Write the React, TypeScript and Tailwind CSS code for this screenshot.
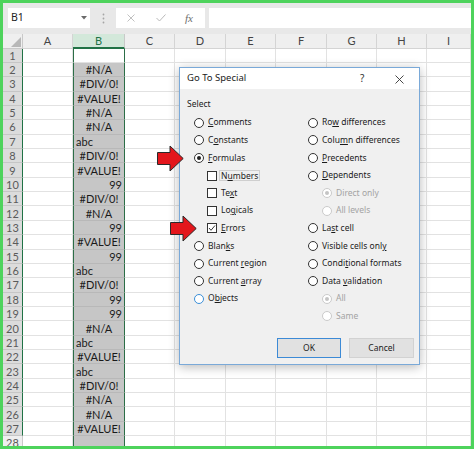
import clsx from 'clsx'

const cols = ['A', 'B', 'C', 'D', 'E', 'F', 'G', 'H', 'I']

// value, alignment of column B
const bVals: [string, 'c' | 'l' | 'r'][] = [
  ['', 'c'],
  ['#N/A', 'c'],
  ['#DIV/0!', 'c'],
  ['#VALUE!', 'c'],
  ['#N/A', 'c'],
  ['#N/A', 'c'],
  ['abc', 'l'],
  ['#DIV/0!', 'c'],
  ['#VALUE!', 'c'],
  ['99', 'r'],
  ['#DIV/0!', 'c'],
  ['#N/A', 'c'],
  ['99', 'r'],
  ['#VALUE!', 'c'],
  ['99', 'r'],
  ['abc', 'l'],
  ['#DIV/0!', 'c'],
  ['99', 'r'],
  ['99', 'r'],
  ['#N/A', 'c'],
  ['abc', 'l'],
  ['#VALUE!', 'c'],
  ['abc', 'l'],
  ['#DIV/0!', 'c'],
  ['#N/A', 'c'],
  ['#N/A', 'c'],
  ['#VALUE!', 'c'],
  ['', 'c'],
]

const gridCols = 'grid grid-cols-[20px_50px_52px_50px_51px_50px_51px_50px_50px_1fr]'

function Radio({ checked, disabled, focus }: { checked?: boolean; disabled?: boolean; focus?: boolean }) {
  return (
    <span
      className={clsx(
        'flex h-[10px] w-[10px] shrink-0 items-center justify-center rounded-full border bg-white',
        disabled ? 'border-[#cacaca]' : focus ? 'border-[#3a8fd8]' : 'border-[#333]'
      )}
    >
      {checked && (
        <span className={clsx('h-[4px] w-[4px] rounded-full', disabled ? 'bg-[#c4c4c4]' : 'bg-[#1f1f1f]')} />
      )}
    </span>
  )
}

function Check({ checked }: { checked?: boolean }) {
  return (
    <span className="flex h-[10px] w-[10px] shrink-0 items-center justify-center border border-[#333] bg-white">
      {checked && (
        <svg width="8" height="8" viewBox="0 0 8 8">
          <polyline points="1,4 3,6.3 7,1.5" fill="none" stroke="#222" strokeWidth="0.9" />
        </svg>
      )}
    </span>
  )
}

function Label({ pre, u, post, disabled }: { pre: string; u?: string; post?: string; disabled?: boolean }) {
  return (
    <span className={clsx('whitespace-nowrap', disabled ? 'text-[#a3a3a3]' : 'text-[#1b1b1b]')}>
      {pre}
      {u && <u className="underline-offset-1">{u}</u>}
      {post}
    </span>
  )
}

function Arrow() {
  return (
    <svg width="27" height="27" viewBox="0 0 27 27">
      <path d="M0.5 7.5 H13 V1 L26.2 13.5 L13 26 V19.5 H0.5 Z" fill="#e3161c" stroke="#2a2a2a" strokeWidth="1" />
    </svg>
  )
}

function Dialog() {
  const row = 'flex h-[17.6px] items-center gap-[4px]'
  return (
    <div className="absolute left-[176px] top-[64px] flex h-[298px] w-[241px] flex-col border border-[#7aa9d8] bg-[#f0f0f0] font-['Noto_Sans',sans-serif] text-[8.5px] shadow-[0_2px_10px_rgba(0,0,0,0.28)]">
      <div className="relative flex h-[21px] items-center bg-white pl-[7px] text-[9.5px] text-[#1b1b1b]">
        Go To Special
        <span className="absolute left-[180px] top-[3px] text-[10px] text-[#333]">?</span>
        <svg className="absolute left-[215px] top-[7px]" width="9" height="9" viewBox="0 0 9 9">
          <path d="M0.5 0.5 L8.5 8.5 M8.5 0.5 L0.5 8.5" stroke="#333" strokeWidth="0.9" />
        </svg>
      </div>
      <div className="pl-[7px] pt-[8px]">
        <div className="flex h-[14px] items-center text-[#1b1b1b]">Select</div>
      </div>
      <div className="mt-[3px] flex">
        <div className="w-[128px] pl-[14px]">
          <div className={row}><Radio /><Label pre="" u="C" post="omments" /></div>
          <div className={row}><Radio /><Label pre="C" u="o" post="nstants" /></div>
          <div className={row}><Radio checked /><Label pre="" u="F" post="ormulas" /></div>
          <div className={clsx(row, 'pl-[13px]')}>
            <Check />
            <span className="-ml-[2px] border border-[#cfcfcf] px-[1px] leading-[9px]">
              <Label pre="N" u="u" post="mbers" />
            </span>
          </div>
          <div className={clsx(row, 'pl-[13px]')}><Check /><Label pre="Te" u="x" post="t" /></div>
          <div className={clsx(row, 'pl-[13px]')}><Check /><Label pre="Lo" u="g" post="icals" /></div>
          <div className={clsx(row, 'pl-[13px]')}><Check checked /><Label pre="" u="E" post="rrors" /></div>
          <div className={row}><Radio /><Label pre="Blan" u="k" post="s" /></div>
          <div className={row}><Radio /><Label pre="Current " u="r" post="egion" /></div>
          <div className={row}><Radio /><Label pre="Current " u="a" post="rray" /></div>
          <div className={row}><Radio focus /><Label pre="O" u="b" post="jects" /></div>
        </div>
        <div className="flex-1">
          <div className={row}><Radio /><Label pre="Ro" u="w" post=" differences" /></div>
          <div className={row}><Radio /><Label pre="Colu" u="m" post="n differences" /></div>
          <div className={row}><Radio /><Label pre="" u="P" post="recedents" /></div>
          <div className={row}><Radio /><Label pre="" u="D" post="ependents" /></div>
          <div className={clsx(row, 'pl-[14px]')}><Radio checked disabled /><Label pre="Direct only" disabled /></div>
          <div className={clsx(row, 'pl-[14px]')}><Radio disabled /><Label pre="All levels" disabled /></div>
          <div className={row}><Radio /><Label pre="La" u="s" post="t cell" /></div>
          <div className={row}><Radio /><Label pre="Visible cells onl" u="y" /></div>
          <div className={row}><Radio /><Label pre="Condi" u="t" post="ional formats" /></div>
          <div className={row}><Radio /><Label pre="Data " u="v" post="alidation" /></div>
          <div className={clsx(row, 'pl-[14px]')}><Radio checked disabled /><Label pre="All" disabled /></div>
          <div className={clsx(row, 'pl-[14px]')}><Radio disabled /><Label pre="Same" disabled /></div>
        </div>
      </div>
      <div className="mt-auto mb-[6px] flex justify-end gap-[8px] pr-[5px]">
        <button className="flex h-[20px] w-[64px] items-center justify-center border border-[#3c8ad6] bg-[#e1e1e1] text-[#1b1b1b]">
          OK
        </button>
        <button className="flex h-[20px] w-[65px] items-center justify-center border border-[#d2d2d2] bg-[#e1e1e1] text-[#1b1b1b]">
          Cancel
        </button>
      </div>
    </div>
  )
}

export default function App() {
  return (
    <div className="relative h-[449px] w-[474px] overflow-hidden border-[3px] border-[#4ed35c] bg-white font-['Lato',sans-serif]">
      {/* name box + formula bar */}
      <div className="flex h-[31px] items-start bg-[#e8e8e8] pl-[5px] pt-[5px]">
        <div className="relative flex h-[20px] w-[82px] items-center bg-white pl-[3px] font-['Noto_Sans',sans-serif] text-[10.5px] text-[#222]">
          B1
          <svg className="absolute left-[73px] top-[8px]" width="6" height="4" viewBox="0 0 6 4">
            <path d="M0 0 H6 L3 3.5 Z" fill="#6b6b6b" />
          </svg>
        </div>
        <div className="flex h-[20px] w-[26px] items-center justify-center">
          <svg width="3" height="11" viewBox="0 0 3 11">
            <circle cx="1.5" cy="1.5" r="0.9" fill="#a5a5a5" />
            <circle cx="1.5" cy="5.5" r="0.9" fill="#a5a5a5" />
            <circle cx="1.5" cy="9.5" r="0.9" fill="#a5a5a5" />
          </svg>
        </div>
        <div className="relative h-[20px] w-[89px] bg-white">
          <svg className="absolute left-[11px] top-[6px]" width="8" height="8" viewBox="0 0 8 8">
            <path d="M0.5 0.5 L7.5 7.5 M7.5 0.5 L0.5 7.5" stroke="#b9b9b9" strokeWidth="0.9" />
          </svg>
          <svg className="absolute left-[40px] top-[6px]" width="10" height="8" viewBox="0 0 10 8">
            <polyline points="0.5,4 3.5,7 9.5,0.5" fill="none" stroke="#b9b9b9" strokeWidth="1" />
          </svg>
          <span className="absolute left-[69px] top-[2px] font-['Liberation_Serif',serif] text-[11px] italic text-[#6d6d6d]">
            fx
          </span>
        </div>
        <div className="ml-[4px] h-[20px] flex-1 bg-white" />
      </div>

      {/* column headers */}
      <div className={clsx(gridCols, 'h-[14.5px] bg-[#efefef] text-[11px] text-[#444]')}>
        <div className="relative border-r border-b border-[#c9c9c9]">
          <svg className="absolute right-[1px] bottom-[1px]" width="10" height="10" viewBox="0 0 10 10">
            <path d="M10 0 V10 H0 Z" fill="#b8b8b8" />
          </svg>
        </div>
        {cols.map((c) => (
          <div
            key={c}
            className={clsx(
              'flex items-center justify-center border-r leading-none',
              c === 'B'
                ? 'border-b-2 border-r-[#c9c9c9] border-b-[#217346] bg-[#d3e8da] text-[#217346]'
                : 'border-b border-[#d4d4d4]'
            )}
          >
            {c}
          </div>
        ))}
      </div>

      {/* rows */}
      {bVals.map(([v, a], i) => (
        <div key={i} className={clsx(gridCols, 'h-[14.36px] text-[11px] leading-none')}>
          <div
            className={clsx(
              'flex items-center justify-center border-b text-[#5a5a5a]',
              i < 27 ? 'border-r border-b-[#c6c6c6] border-r-[#217346] bg-[#dcdcdc]' : 'border-r border-[#c9c9c9] bg-[#efefef]'
            )}
          >
            {i + 1}
          </div>
          <div className="border-r border-b border-[#e2e2e2]" />
          <div
            className={clsx(
              'flex items-center border-x border-x-[#2c6e47] border-b px-[2px] text-[#1a1a1a]',
              i === 0 ? 'bg-white border-b-[#e2e2e2]' : 'bg-[#c6c6c6] border-b-[#b8b8b8]',
              a === 'c' && 'justify-center',
              a === 'l' && 'justify-start',
              a === 'r' && 'justify-end'
            )}
          >
            {v}
          </div>
          {cols.slice(2).map((c) => (
            <div key={c} className="border-r border-b border-[#e2e2e2]" />
          ))}
        </div>
      ))}

      <Dialog />

      <div className="absolute left-[154px] top-[142px]">
        <Arrow />
      </div>
      <div className="absolute left-[167px] top-[212px]">
        <Arrow />
      </div>
    </div>
  )
}
